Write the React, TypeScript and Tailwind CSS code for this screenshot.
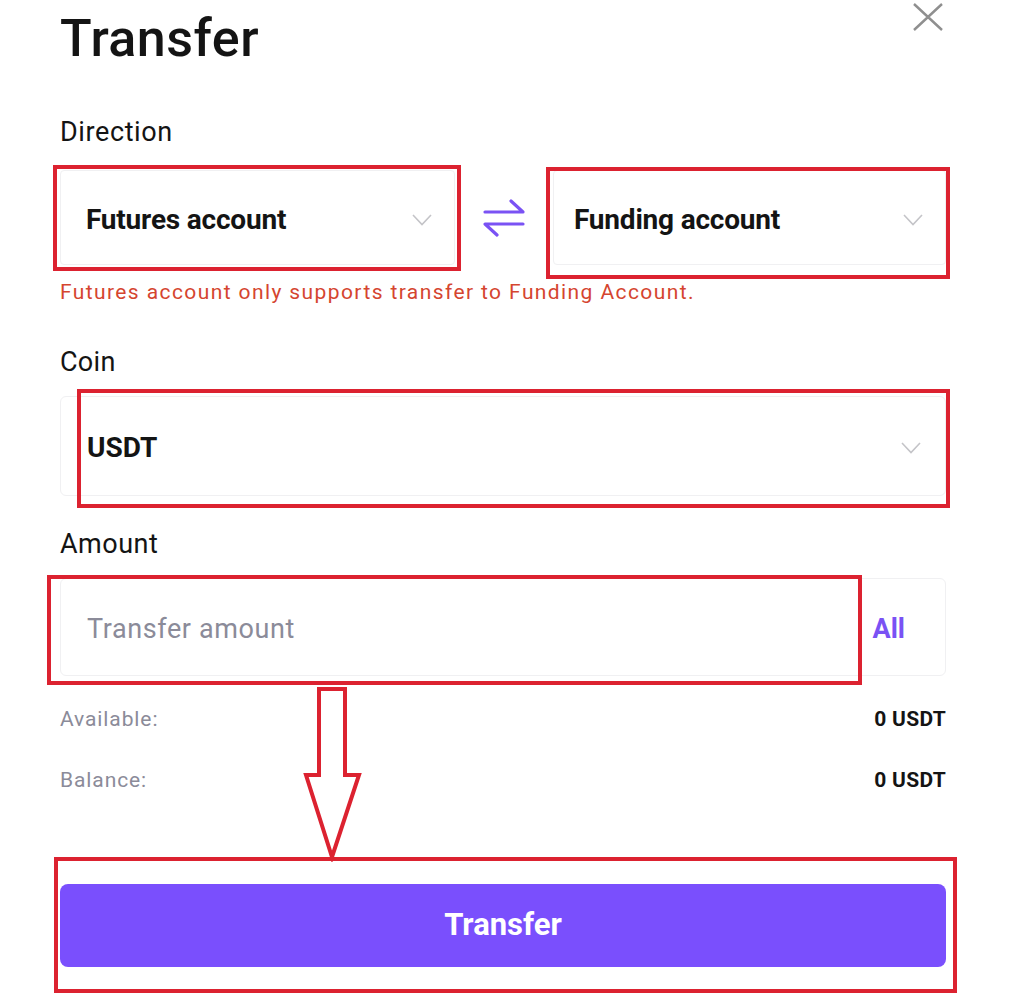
import React from "react";

const Chevron = ({ className = "" }: { className?: string }) => (
  <svg width="20" height="12" viewBox="0 0 20 12" className={className} fill="none">
    <path d="M1 1 L10 10.5 L19 1" stroke="#c4c4c8" strokeWidth="1.6" />
  </svg>
);

const RedBox = ({ cls }: { cls: string }) => (
  <div className={`absolute border-[4px] border-[#dc2230] pointer-events-none ${cls}`} />
);

export default function App() {
  return (
    <div
      className="relative w-[1010px] h-[998px] bg-white overflow-hidden text-[#141414]"
      style={{ fontFamily: "Roboto, 'Noto Sans', sans-serif" }}
    >
      <div className="w-[946px] pl-[60px]">
        {/* header */}
        <div className="flex justify-between items-start">
          <h1 className="mt-[13px] text-[52px] leading-[52px] font-medium tracking-[0.5px]">Transfer</h1>
          <svg width="32" height="30" viewBox="0 0 32 30" className="mt-[2px] mr-[2px]" fill="none">
            <path d="M2 2 L30 28 M30 2 L2 28" stroke="#8f8f8f" strokeWidth="2.4" />
          </svg>
        </div>

        {/* Direction */}
        <div className="mt-[53px] text-[27px] leading-[28px] tracking-[0.6px]">Direction</div>
        <div className="mt-[24px] flex items-center">
          <div className="w-[395px] h-[95px] rounded-[4px] border border-[#f0f0f2] flex items-center justify-between pl-[25px] pr-[22px] pt-[4px]">
            <span className="text-[28px] font-bold tracking-[-0.2px]">Futures account</span>
            <Chevron />
          </div>
          <div className="w-[98px] flex justify-center">
            <svg width="42" height="38" viewBox="0 0 42 38" fill="none">
              <path d="M2 13 H40 L28 2" stroke="#7a52f4" strokeWidth="3.2" strokeLinejoin="round" strokeLinecap="round" />
              <path d="M40 25 H2 L14 36" stroke="#7a52f4" strokeWidth="3.2" strokeLinejoin="round" strokeLinecap="round" />
            </svg>
          </div>
          <div className="w-[393px] h-[95px] rounded-[4px] border border-[#f0f0f2] flex items-center justify-between pl-[20px] pr-[22px] pt-[4px]">
            <span className="text-[28px] font-bold tracking-[-0.2px]">Funding account</span>
            <Chevron />
          </div>
        </div>
        <div className="mt-[15px] text-[21px] leading-[24px] text-[#d5452f] tracking-[1.4px]">
          Futures account only supports transfer to Funding Account.
        </div>

        {/* Coin */}
        <div className="mt-[44px] text-[27px] leading-[28px] tracking-[0.3px]">Coin</div>
        <div className="mt-[20px] h-[100px] rounded-[6px] border border-[#f0f0f2] flex items-center justify-between pl-[26px] pr-[24px] pt-[4px]">
          <span className="text-[28px] font-bold">USDT</span>
          <Chevron />
        </div>

        {/* Amount */}
        <div className="mt-[34px] text-[27px] leading-[28px] tracking-[0.5px]">Amount</div>
        <div className="mt-[20px] h-[98px] rounded-[6px] border border-[#f0f0f2] flex items-center justify-between pl-[26px] pr-[40px] pt-[4px]">
          <span className="text-[27px] text-[#8b8b99] tracking-[0.6px]">Transfer amount</span>
          <span className="text-[27px] font-bold text-[#7a52f4]">All</span>
        </div>

        {/* info rows */}
        <div className="mt-[32px] flex justify-between items-center h-[24px]">
          <span className="text-[21px] text-[#8b8b99] tracking-[0.9px]">Available:</span>
          <span className="text-[21px] font-bold tracking-[0.3px]">0 USDT</span>
        </div>
        <div className="mt-[37px] flex justify-between items-center h-[24px]">
          <span className="text-[21px] text-[#8b8b99] tracking-[0.9px]">Balance:</span>
          <span className="text-[21px] font-bold tracking-[0.3px]">0 USDT</span>
        </div>

        <button className="mt-[91px] w-full h-[83px] rounded-[8px] bg-[#7a4ffd] text-white text-[31px] font-bold">
          Transfer
        </button>
      </div>

      {/* annotations */}
      <RedBox cls="left-[53px] top-[165px] w-[408px] h-[106px]" />
      <RedBox cls="left-[546px] top-[167px] w-[404px] h-[112px]" />
      <RedBox cls="left-[77px] top-[389px] w-[873px] h-[119px]" />
      <RedBox cls="left-[47px] top-[575px] w-[815px] h-[110px]" />
      <RedBox cls="left-[54px] top-[857px] w-[903px] h-[136px]" />
      <svg className="absolute left-[300px] top-[686px]" width="66" height="176" viewBox="0 0 66 176" fill="none">
        <path d="M19 3 H45 V89 H59 L32 171 L6 89 H19 Z" stroke="#dc2230" strokeWidth="4" strokeLinejoin="miter" fill="white" />
      </svg>
    </div>
  );
}
